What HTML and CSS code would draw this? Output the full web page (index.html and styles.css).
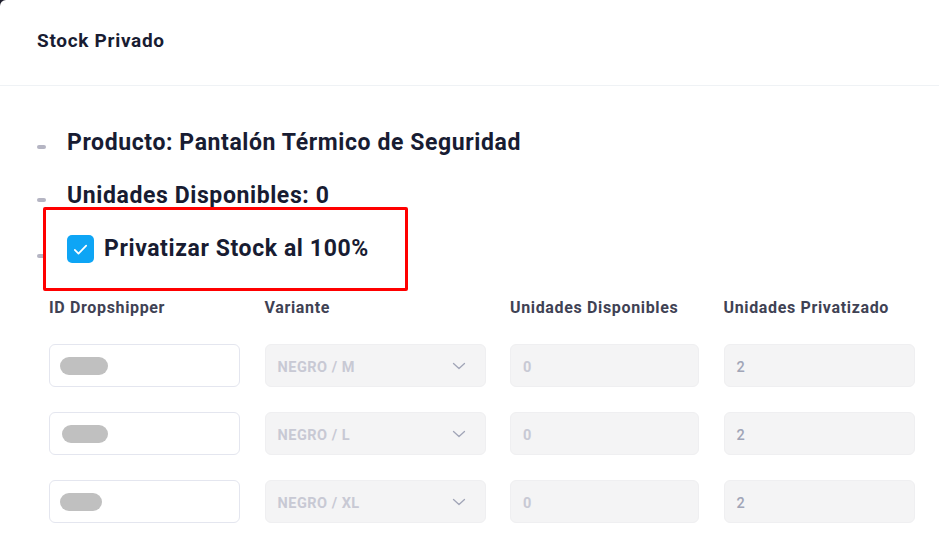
FILE: index.html
```html
<!DOCTYPE html>
<html lang="es">
<head>
<meta charset="utf-8">
<title>Stock Privado</title>
<link rel="stylesheet" href="styles.css">
</head>
<body>
<div class="modal">
  <div class="modal-header">
    <h2 class="modal-title">Stock Privado</h2>
  </div>
  <div class="modal-body">
    <ul class="info-list">
      <li class="info-item">Producto: Pantalón Térmico de Seguridad</li>
      <li class="info-item">Unidades Disponibles: 0</li>
      <li class="info-item info-check">
        <span class="checkbox">
          <svg viewBox="0 0 16 16" width="19" height="19"><path d="M3.2 8.4l3.1 3 6.5-6.6" fill="none" stroke="#fff" stroke-width="1.5" stroke-linecap="round" stroke-linejoin="round"/></svg>
        </span>
        <span>Privatizar Stock al 100%</span>
      </li>
    </ul>
    <div class="highlight"></div>

    <div class="stock-grid">
      <div class="col-head">ID Dropshipper</div>
      <div class="col-head">Variante</div>
      <div class="col-head">Unidades Disponibles</div>
      <div class="col-head">Unidades Privatizado</div>

      <div class="field field-white"><span class="pill"></span></div>
      <div class="field field-grey field-select"><span class="muted">NEGRO / M</span><svg class="chev" viewBox="0 0 16 16" width="16" height="16"><path d="M2.5 5.5l5.5 5 5.5-5" fill="none" stroke="#a1a5b7" stroke-width="1.3" stroke-linecap="round" stroke-linejoin="round"/></svg></div>
      <div class="field field-grey"><span class="muted">0</span></div>
      <div class="field field-grey"><span class="value">2</span></div>

      <div class="field field-white"><span class="pill pill-2"></span></div>
      <div class="field field-grey field-select"><span class="muted">NEGRO / L</span><svg class="chev" viewBox="0 0 16 16" width="16" height="16"><path d="M2.5 5.5l5.5 5 5.5-5" fill="none" stroke="#a1a5b7" stroke-width="1.3" stroke-linecap="round" stroke-linejoin="round"/></svg></div>
      <div class="field field-grey"><span class="muted">0</span></div>
      <div class="field field-grey"><span class="value">2</span></div>

      <div class="field field-white"><span class="pill pill-3"></span></div>
      <div class="field field-grey field-select"><span class="muted">NEGRO / XL</span><svg class="chev" viewBox="0 0 16 16" width="16" height="16"><path d="M2.5 5.5l5.5 5 5.5-5" fill="none" stroke="#a1a5b7" stroke-width="1.3" stroke-linecap="round" stroke-linejoin="round"/></svg></div>
      <div class="field field-grey"><span class="muted">0</span></div>
      <div class="field field-grey"><span class="value">2</span></div>
    </div>
  </div>
</div>
</body>
</html>
```

FILE: styles.css
```css
* { box-sizing: border-box; }
html, body { margin: 0; padding: 0; }
body {
  background: #1e1e2d;
  font-family: Roboto, Inter, "Noto Sans", sans-serif;
  color: #181c32;
}
.modal {
  background: #fff;
  min-height: 546px;
  border-top-left-radius: 6px;
  overflow: hidden;
}
.modal-header {
  height: 86px;
  padding: 0 37px;
  display: flex;
  align-items: center;
  border-bottom: 1px solid #eff2f5;
}
.modal-title {
  margin: 0;
  font-size: 19px;
  letter-spacing: 0.7px;
  font-weight: 700;
  color: #181c32;
  padding-bottom: 4px;
}
.modal-body {
  position: relative;
  padding: 41px 24px 0 37px;
}
.info-list {
  list-style: none;
  margin: 0;
  padding: 0;
}
.info-item {
  position: relative;
  padding-left: 30px;
  font-size: 23px;
  letter-spacing: 0.6px;
  font-weight: 700;
  line-height: 32px;
  color: #181c32;
  margin-bottom: 21px;
}
.info-item::before {
  content: "";
  position: absolute;
  left: 0;
  top: 18px;
  width: 9px;
  height: 4px;
  border-radius: 2px;
  background: #b5b5c3;
}
.info-check {
  display: flex;
  align-items: center;
  gap: 10px;
  margin-top: 21px;
  margin-bottom: 0;
}
.info-check::before { top: 21px; }
.checkbox {
  width: 27px;
  height: 28px;
  border-radius: 5px;
  background: #0ea5f5;
  display: flex;
  align-items: center;
  justify-content: center;
}
.highlight {
  position: absolute;
  left: 43px;
  top: 121px;
  width: 365px;
  height: 84px;
  border: 3px solid #ff0000;
  border-radius: 2px;
  pointer-events: none;
}
.stock-grid {
  margin-top: 33px;
  margin-left: 12px;
  display: grid;
  grid-template-columns: 191px 221px 189px 191px;
  column-gap: 24.5px;
  row-gap: 25px;
}
.col-head {
  font-size: 16px;
  letter-spacing: 0.65px;
  font-weight: 700;
  color: #3f4254;
  line-height: 20px;
  margin-bottom: 1px;
}
.field {
  height: 43px;
  border-radius: 6px;
  display: flex;
  align-items: center;
  padding: 3px 12px 0;
  font-size: 14.5px;
  letter-spacing: 0.5px;
  font-weight: 500;
}
.field-white {
  background: #fff;
  border: 1px solid #e4e6ef;
  padding: 0 10px;
}
.field-grey {
  background: #f4f4f5;
  border: 1px solid #efeff1;
}
.field-select { justify-content: space-between; padding-right: 18px; }
.muted { color: #c8c9d4; font-weight: 700; }
.value { color: #a1a5b7; }
.pill {
  display: block;
  width: 48px;
  height: 18px;
  border-radius: 9px;
  background: #c0c0c0;
}
.pill-2 { width: 46px; margin-left: 2px; }
.pill-3 { width: 42px; }
.chev { display: block; margin-top: -3px; }
```
